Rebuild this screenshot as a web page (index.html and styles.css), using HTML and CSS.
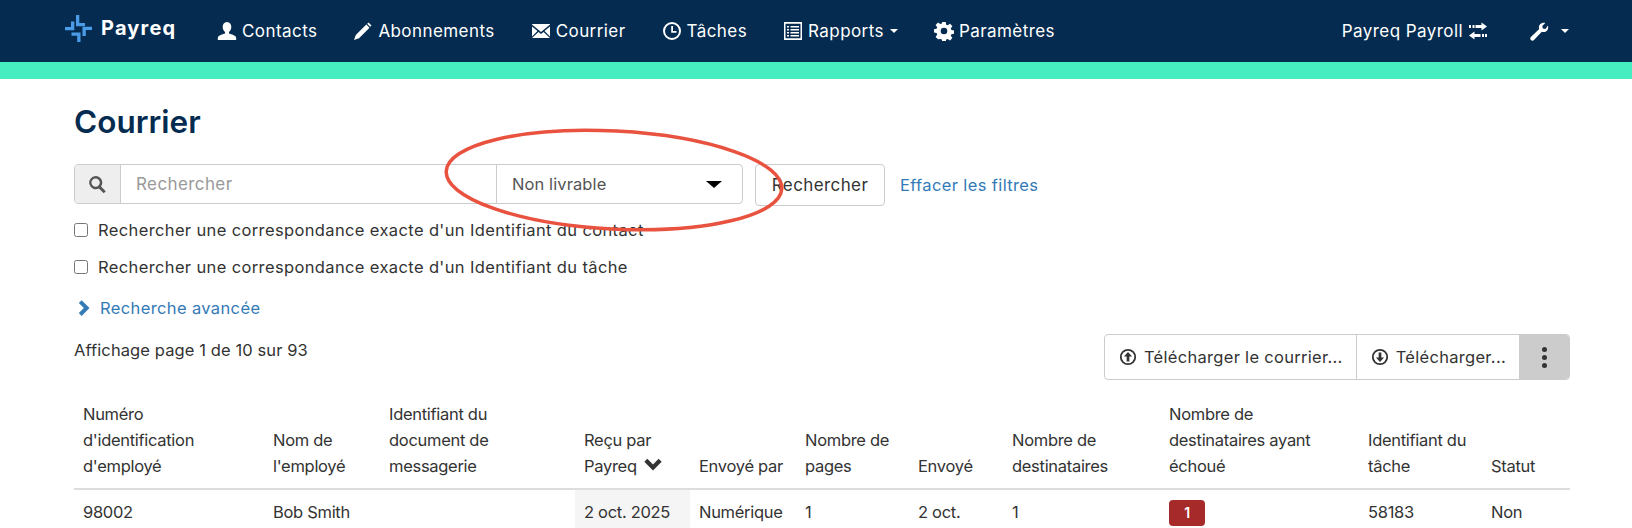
FILE: index.html
```html
<!DOCTYPE html>
<html lang="fr">
<head>
<meta charset="utf-8">
<title>Courrier</title>
<link rel="stylesheet" href="styles.css">
</head>
<body>
<nav class="navbar">
  <a class="brand">
    <svg class="logo" viewBox="0 0 27 27" width="27" height="27"><g fill="#4a9be8"><path d="M11 0h3.300v8H20v3.300h-9z"/><path d="M0 12h6V6.500h3.300V15.300H0z"/><path d="M6.500 17.500H15.500V27H12.200V20.800H6.500z"/><path d="M17.500 11.800H27V15H20.800V21H17.500z"/></g></svg>
    <span>Payreq</span>
  </a>
  <ul class="nav-main">
    <li><svg class="ic" viewBox="0 0 20 20"><path d="M10 1c2.800 0 4.300 2.200 4.300 5 0 2-.9 3.900-2.300 5v1.600c2.500.8 6.500 2 7 3.400.2.800.2 2 .2 3H.8c0-1 0-2.200.2-3 .5-1.400 4.500-2.600 7-3.400V11C6.600 9.900 5.700 8 5.700 6c0-2.800 1.500-5 4.300-5z"/></svg>Contacts</li>
    <li><svg class="ic" viewBox="0 0 20 20"><path d="M15.500 1.500l3 3-1.300 1.300-3-3zM13.300 3.500l3.200 3.200L6 17.200 1 19l1.800-5z"/></svg>Abonnements</li>
    <li><svg class="ic" viewBox="0 0 20 20"><path d="M1 3h18v.6l-9 7.400-9-7.400zM1 5.500l5.500 4.500L1 15.500zM19 5.500V15.500L13.500 10zM7.500 11l2.500 2 2.500-2 6.500 6H1z"/></svg>Courrier</li>
    <li><svg class="ic" viewBox="0 0 20 20"><circle cx="10" cy="10" r="8" fill="none" stroke="#fff" stroke-width="2"/><path d="M9.200 5h1.800v5h3.500v1.800H9.200z"/></svg>Tâches</li>
    <li><svg class="ic" viewBox="0 0 20 20"><path fill-rule="evenodd" d="M1 1h18v18H1zM2.500 2.800v14.400h15V2.800zM4 5h2v1.600H4zM7.500 5H16v1.600H7.500zM4 8h2v1.600H4zM7.500 8H16v1.600H7.500zM4 11h2v1.600H4zM7.500 11H16v1.600H7.500zM4 14h2v1.600H4zM7.500 14H16v1.600H7.500z"/></svg>Rapports<i class="caret"></i></li>
    <li><svg class="ic" viewBox="0 0 20 20"><path fill-rule="evenodd" d="M8.300 1h3.400l.5 2.700 1.500.6 2.300-1.600 2.400 2.400-1.600 2.300.6 1.500 2.600.5v3.400l-2.600.5-.6 1.500 1.600 2.300-2.400 2.400-2.300-1.600-1.500.6-.5 2.500H8.300l-.5-2.500-1.500-.6L4 18.300l-2.400-2.400 1.600-2.300-.6-1.500L0 11.600V8.200l2.600-.5.6-1.500L1.600 3.900 4 1.500l2.300 1.600 1.500-.6zM10 6.700a3.300 3.300 0 1 0 0 6.600 3.300 3.300 0 0 0 0-6.600z"/></svg>Paramètres</li>
  </ul>
  <ul class="nav-right">
    <li>Payreq Payroll<svg class="ic ic-after" viewBox="0 0 20 20"><path d="M13.500 1.500L19 5.500l-5.500 4V7H7.500V4h6zM6.500 10.500v2.500h6v3h-6v2.500L1 14.500zM1 4h2v3H1zM4.500 4h2v3h-2zM14 13h2v3h-2zM17 13h2v3h-2z"/></svg></li>
    <li class="tools"><svg class="ic" viewBox="0 0 20 20"><path d="M19 4.500c.6 2.300 0 4.500-1.700 5.700-1.500 1-3.200 1.100-4.500.5L5 19c-.9.900-2.200.9-3.100 0-.9-.9-.9-2.200 0-3.100l8.300-7.800c-.6-1.500-.4-3.200.7-4.500C12.200 2 14.400 1.400 16.300 2l-3 3 .5 2.600 2.600.5z"/></svg><i class="caret"></i></li>
  </ul>
</nav>
<div class="accent"></div>

<main class="page">
  <h1>Courrier</h1>

  <form class="search">
    <div class="group">
      <span class="addon"><svg viewBox="0 0 20 20" width="19" height="19"><path fill="#555" fill-rule="evenodd" d="M8 1a7 7 0 0 1 5.700 11l5 5-2.200 2.200-5-5A7 7 0 1 1 8 1zm0 2.600a4.400 4.400 0 1 0 0 8.800 4.400 4.400 0 0 0 0-8.800z"/></svg></span>
      <span class="field placeholder">Rechercher</span>
      <span class="select">Non livrable<i class="select-arrow"></i></span>
    </div>
    <button type="button" class="btn">Rechercher</button>
    <a class="link clear">Effacer les filtres</a>
  </form>

  <label class="check"><input type="checkbox">Rechercher une correspondance exacte d'un Identifiant du contact</label>
  <label class="check"><input type="checkbox">Rechercher une correspondance exacte d'un Identifiant du tâche</label>

  <a class="link advanced"><svg viewBox="0 0 12 16" width="14" height="18"><path fill="#337ab7" d="M3 1l7 7-7 7-2.500-2.500L5 8 .5 3.500z"/></svg>Recherche avancée</a>

  <div class="toolbar">
    <span class="count">Affichage page 1 de 10 sur 93</span>
    <div class="btn-group">
      <span class="gbtn"><svg viewBox="0 0 20 20" width="18" height="18"><path fill-rule="evenodd" fill="#333" d="M10 1a9 9 0 1 1 0 18 9 9 0 0 1 0-18zm0 2a7 7 0 1 0 0 14 7 7 0 0 0 0-14zM10 4.500l4.500 5h-3V15h-3V9.500h-3z"/></svg>Télécharger le courrier...</span>
      <span class="gbtn"><svg viewBox="0 0 20 20" width="18" height="18"><path fill-rule="evenodd" fill="#333" d="M10 1a9 9 0 1 1 0 18 9 9 0 0 1 0-18zm0 2a7 7 0 1 0 0 14 7 7 0 0 0 0-14zM10 15.500l-4.500-5h3V5h3v5.500h3z"/></svg>Télécharger...</span>
      <span class="gbtn more"><i></i><i></i><i></i></span>
    </div>
  </div>

  <table class="mail">
    <colgroup>
      <col class="c1"><col class="c2"><col class="c3"><col class="c4"><col class="c5"><col class="c6">
      <col class="c7"><col class="c8"><col class="c9"><col class="c10"><col class="c11">
    </colgroup>
    <thead>
      <tr>
        <th>Numéro d'identification d'employé</th>
        <th>Nom de l'employé</th>
        <th>Identifiant du document de messagerie</th>
        <th>Reçu par Payreq <svg class="sort" viewBox="0 0 16 12" width="18" height="13"><path fill="#333" d="M0 3.500L2.800.8 8 6l5.200-5.200L16 3.500 8 11.500z"/></svg></th>
        <th>Envoyé par</th>
        <th>Nombre de pages</th>
        <th>Envoyé</th>
        <th>Nombre de destinataires</th>
        <th>Nombre de destinataires ayant échoué</th>
        <th>Identifiant du tâche</th>
        <th>Statut</th>
      </tr>
    </thead>
    <tbody>
      <tr>
        <td>98002</td>
        <td>Bob Smith</td>
        <td></td>
        <td class="sorted">2 oct. 2025</td>
        <td>Numérique</td>
        <td>1</td>
        <td>2 oct.</td>
        <td>1</td>
        <td><span class="badge">1</span></td>
        <td>58183</td>
        <td>Non</td>
      </tr>
    </tbody>
  </table>

  <svg class="annotation" viewBox="0 0 360 120" width="360" height="120"><ellipse cx="176" cy="55" rx="168" ry="49" transform="rotate(3 176 55)" fill="none" stroke="#e8523f" stroke-width="3.500"/></svg>
</main>
</body>
</html>
```
FILE: styles.css
```css
* { box-sizing: border-box; }
html, body { margin: 0; padding: 0; height: 528px; overflow: hidden; }
body { font-family: Inter, "Open Sans", sans-serif; font-size: 16.5px; color: #333; background: #fff; letter-spacing: 0.37px; }
ul { list-style: none; margin: 0; padding: 0; }
.navbar { height: 62px; background: #052c50; color: #fff; display: flex; align-items: center; padding: 0 63px 0 65px; font-size: 17px; letter-spacing: 0.43px; }
.brand { display: flex; align-items: center; gap: 9px; font-weight: 700; font-size: 20px; letter-spacing: 1.2px; width: 152px; margin-top: -6px; }
.logo { display: block; }
.nav-main { display: flex; align-items: center; gap: 36px; }
.nav-main li, .nav-right li { display: flex; align-items: center; white-space: nowrap; }
.ic { width: 20px; height: 20px; fill: #fff; margin-right: 5px; flex: none; }
.ic-after { margin: 0 0 0 5px; }
.caret { display: inline-block; margin-left: 6px; border-top: 4px solid #fff; border-left: 4px solid transparent; border-right: 4px solid transparent; }
.nav-right { margin-left: auto; display: flex; align-items: center; gap: 41px; }
.tools .ic { margin-right: 6px; }
.accent { height: 17px; background: #46edc0; }

.page { position: relative; padding: 0 62px 0 74px; }
h1 { margin: 0; padding-top: 25px; height: 85px; font-size: 31.5px; line-height: 36px; font-weight: 600; color: #052c50; letter-spacing: 0; }

.search { display: flex; align-items: flex-start; height: 42px; }
.group { display: flex; width: 669px; height: 40px; border: 1px solid #ccc; border-radius: 4px; }
.addon { width: 46px; flex: none; display: flex; align-items: center; justify-content: center; background: #eee; border-right: 1px solid #ccc; border-radius: 3px 0 0 3px; }
.field { width: 375px; flex: none; display: flex; align-items: center; padding-left: 15px; color: #999; font-size: 17px; letter-spacing: 0.4px; }
.select { flex: 1; display: flex; align-items: center; justify-content: space-between; padding: 0 20px 0 15px; border-left: 1px solid #ccc; color: #555; letter-spacing: 0.1px; }
.select-arrow { border-top: 7px solid #000; border-left: 8px solid transparent; border-right: 8px solid transparent; }
.btn { width: 130px; height: 42px; margin-left: 12px; padding: 0; background: #fff; border: 1px solid #ccc; border-radius: 4px; font: inherit; font-size: 17px; letter-spacing: 0.4px; color: #333; }
.link { color: #337ab7; }
.clear { margin-left: 15px; line-height: 42px; }

.check { display: flex; align-items: center; height: 24px; white-space: nowrap; }
.search + .check { margin-top: 12px; }
.check + .check { margin-top: 13px; }
.check input { width: 14px; height: 14px; margin: 0 10px 0 0; }

.advanced { display: flex; align-items: center; gap: 8px; height: 24px; margin-top: 17px; padding-left: 4px; }

.toolbar { display: flex; justify-content: space-between; align-items: flex-start; margin-top: 14px; }
.count { line-height: 24px; padding-top: 4px; letter-spacing: 0.1px; }
.btn-group { display: flex; height: 46px; border: 1px solid #ccc; border-radius: 4px; overflow: hidden; letter-spacing: 0.3px; }
.gbtn { display: flex; align-items: center; gap: 7px; padding: 0 13px 0 14px; border-right: 1px solid #ccc; white-space: nowrap; }
.gbtn.more { width: 49px; padding: 0; gap: 3px; flex-direction: column; justify-content: center; background: #ccc; border-right: 0; }
.more i { width: 5px; height: 5px; border-radius: 50%; background: #333; }

.mail { width: 1496px; table-layout: fixed; border-collapse: collapse; margin-top: 12px; font-size: 16.5px; letter-spacing: -0.3px; }
.c1 { width: 190px; } .c2 { width: 116px; } .c3 { width: 195px; } .c4 { width: 115px; }
.c5 { width: 106px; } .c6 { width: 113px; } .c7 { width: 94px; } .c8 { width: 157px; }
.c9 { width: 199px; } .c10 { width: 123px; } .c11 { width: 88px; }
th { padding: 9px; font-weight: 400; text-align: left; vertical-align: bottom; line-height: 26px; color: #333; border-bottom: 2px solid #ddd; }
td { padding: 9px; line-height: 26px; vertical-align: top; white-space: nowrap; }
.sorted { background: #f5f5f5; }
.sort { vertical-align: 1px; margin-left: 3px; }
.badge { display: inline-block; width: 36px; height: 26px; line-height: 26px; text-align: center; border-radius: 4px; background: #a72a2a; color: #fff; font-size: 14px; font-weight: 600; }

.annotation { position: absolute; left: 438px; top: 46px; }
```
